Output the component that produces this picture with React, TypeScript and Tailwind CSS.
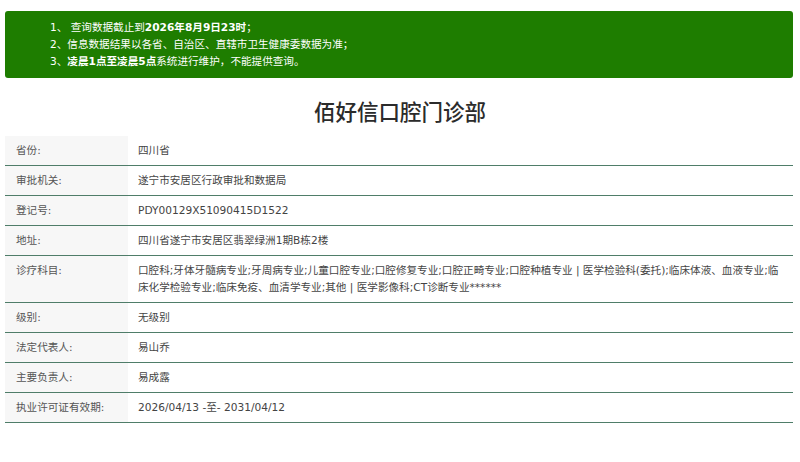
const rows: { label: string; value: string }[] = [
  { label: "省份:", value: "四川省" },
  { label: "审批机关:", value: "遂宁市安居区行政审批和数据局" },
  { label: "登记号:", value: "PDY00129X51090415D1522" },
  { label: "地址:", value: "四川省遂宁市安居区翡翠绿洲1期B栋2楼" },
  {
    label: "诊疗科目:",
    value:
      "口腔科;牙体牙髓病专业;牙周病专业;儿童口腔专业;口腔修复专业;口腔正畸专业;口腔种植专业 | 医学检验科(委托);临床体液、血液专业;临床化学检验专业;临床免疫、血清学专业;其他 | 医学影像科;CT诊断专业******",
  },
  { label: "级别:", value: "无级别" },
  { label: "法定代表人:", value: "易山乔" },
  { label: "主要负责人:", value: "易成露" },
  { label: "执业许可证有效期:", value: "2026/04/13 -至- 2031/04/12" },
];

export default function App() {
  return (
    <div className="min-h-[462px] bg-white px-[5px] pt-[11px] font-['DejaVu_Sans','Noto_Sans_CJK_SC',sans-serif] text-[10.6px]">
      <div className="mr-[2px] rounded-[3px] bg-[#1e7d00] py-[8px] pl-[45px] leading-[17px] text-white">
        <p>
          1、 查询数据截止到<b>2026年8月9日23时</b>；
        </p>
        <p>2、信息数据结果以各省、自治区、直辖市卫生健康委数据为准；</p>
        <p>
          3、<b>凌晨1点至凌晨5点</b>系统进行维护，不能提供查询。
        </p>
      </div>

      <h1 className="mt-[17px] mb-[9px] text-center font-['Noto_Sans_CJK_SC',sans-serif] text-[21.5px] leading-[32px] font-medium text-[#2b2b2b]">
        佰好信口腔门诊部
      </h1>

      <div className="mr-[2px]">
        {rows.map((r) => (
          <div key={r.label} className="flex border-b border-[#4f7d69] leading-[17px]">
            <div className="w-[123px] shrink-0 bg-[#f7f7f7] py-[6px] pl-[11px] text-[#555]">{r.label}</div>
            <div className="flex-1 py-[6px] pr-[8px] pl-[10px] text-[#444]">{r.value}</div>
          </div>
        ))}
      </div>
    </div>
  );
}
